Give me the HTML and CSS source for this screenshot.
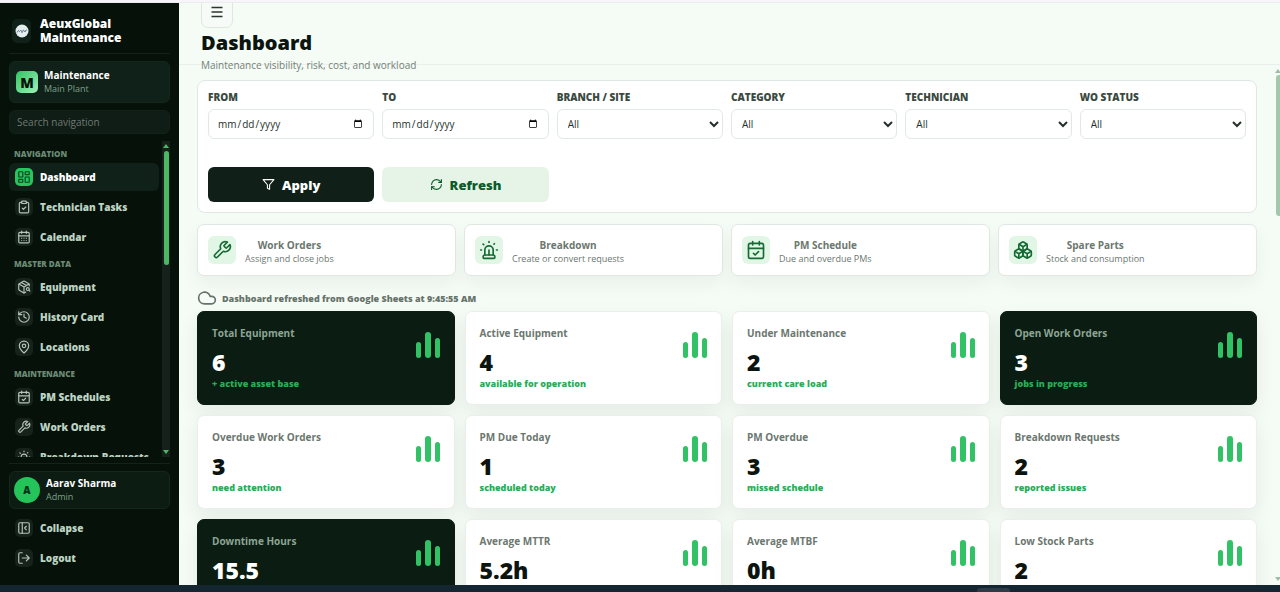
FILE: index.html
```html
<!DOCTYPE html>
<html lang="en">
<head>
    <meta charset="UTF-8">
    <meta name="viewport" content="width=device-width, initial-scale=1.0">
    <title>AeuxGlobal Maintenance</title>
    <link rel="stylesheet" href="styles.css">
</head>
<body>
<svg class="sprite" aria-hidden="true">
    <symbol id="i-dashboard" viewBox="0 0 24 24"><rect x="3" y="3" width="7" height="9" rx="1"/><rect x="14" y="3" width="7" height="5" rx="1"/><rect x="14" y="12" width="7" height="9" rx="1"/><rect x="3" y="16" width="7" height="5" rx="1"/></symbol>
    <symbol id="i-tasks" viewBox="0 0 24 24"><rect x="8" y="2" width="8" height="4" rx="1"/><path d="M16 4h2a2 2 0 0 1 2 2v14a2 2 0 0 1-2 2H6a2 2 0 0 1-2-2V6a2 2 0 0 1 2-2h2"/><path d="m9 14 2 2 4-4"/></symbol>
    <symbol id="i-calendar" viewBox="0 0 24 24"><path d="M8 2v4M16 2v4M3 10h18"/><rect x="3" y="4" width="18" height="18" rx="2"/><path d="M8 14h.01M12 14h.01M16 14h.01M8 18h.01M12 18h.01M16 18h.01"/></symbol>
    <symbol id="i-calendar-check" viewBox="0 0 24 24"><path d="M8 2v4M16 2v4M3 10h18"/><rect x="3" y="4" width="18" height="18" rx="2"/><path d="m9 16 2 2 4-4"/></symbol>
    <symbol id="i-equipment" viewBox="0 0 24 24"><path d="M21 10V8a2 2 0 0 0-1-1.73l-7-4a2 2 0 0 0-2 0l-7 4A2 2 0 0 0 3 8v8a2 2 0 0 0 1 1.73l7 4a2 2 0 0 0 2 0l2-1.14"/><path d="m7.5 4.27 9 5.15M3.29 7 12 12l8.71-5M12 22V12"/><circle cx="18.5" cy="15.5" r="2.5"/><path d="M20.27 17.27 22 19"/></symbol>
    <symbol id="i-history" viewBox="0 0 24 24"><path d="M3 12a9 9 0 1 0 9-9 9.75 9.75 0 0 0-6.74 2.74L3 8"/><path d="M3 3v5h5M12 7v5l4 2"/></symbol>
    <symbol id="i-pin" viewBox="0 0 24 24"><path d="M20 10c0 4.993-5.539 10.193-7.399 11.799a1 1 0 0 1-1.202 0C9.539 20.193 4 14.993 4 10a8 8 0 0 1 16 0"/><circle cx="12" cy="10" r="3"/></symbol>
    <symbol id="i-wrench" viewBox="0 0 24 24"><path d="M14.7 6.3a1 1 0 0 0 0 1.4l1.6 1.6a1 1 0 0 0 1.4 0l3.77-3.77a6 6 0 0 1-7.94 7.94l-6.91 6.91a2.12 2.12 0 0 1-3-3l6.91-6.91a6 6 0 0 1 7.94-7.94l-3.76 3.76z"/></symbol>
    <symbol id="i-siren" viewBox="0 0 24 24"><path d="M7 18v-6a5 5 0 1 1 10 0v6"/><path d="M5 21a1 1 0 0 0 1 1h12a1 1 0 0 0 1-1v-1a2 2 0 0 0-2-2H7a2 2 0 0 0-2 2z"/><path d="M21 12h1M18.5 4.5 18 5M2 12h1M12 2v1M4.929 4.929l.707.707M12 12v6"/></symbol>
    <symbol id="i-collapse" viewBox="0 0 24 24"><rect x="3" y="3" width="18" height="18" rx="2"/><path d="M9 3v18M16 15l-3-3 3-3"/></symbol>
    <symbol id="i-logout" viewBox="0 0 24 24"><path d="m16 17 5-5-5-5M21 12H9M9 21H5a2 2 0 0 1-2-2V5a2 2 0 0 1 2-2h4"/></symbol>
    <symbol id="i-menu" viewBox="0 0 24 24"><path d="M1 3h22M1 12h22M1 21h22"/></symbol>
    <symbol id="i-filter" viewBox="0 0 24 24"><path d="M22 3H2l8 9.46V19l4 2v-8.54z"/></symbol>
    <symbol id="i-refresh" viewBox="0 0 24 24"><path d="M3 12a9 9 0 0 1 9-9 9.75 9.75 0 0 1 6.74 2.74L21 8"/><path d="M21 3v5h-5"/><path d="M21 12a9 9 0 0 1-9 9 9.75 9.75 0 0 1-6.74-2.74L3 16"/><path d="M8 16H3v5"/></symbol>
    <symbol id="i-cloud" viewBox="0 0 24 24"><path d="M17.5 19H9a7 7 0 1 1 6.71-9h1.79a4.5 4.5 0 1 1 0 9Z"/></symbol>
    <symbol id="i-boxes" viewBox="0 0 24 24"><path d="M2.97 12.92A2 2 0 0 0 2 14.63v3.24a2 2 0 0 0 .97 1.71l3 1.8a2 2 0 0 0 2.06 0L12 19v-5.5l-5-3-4.03 2.42Z"/><path d="m7 16.5-4.74-2.85M7 16.5l5-3M7 16.5v5.17"/><path d="M12 13.5V19l3.97 2.38a2 2 0 0 0 2.06 0l3-1.8a2 2 0 0 0 .97-1.71v-3.24a2 2 0 0 0-.97-1.71L17 10.5l-5 3Z"/><path d="m17 16.5-5-3M17 16.5l4.74-2.85M17 16.5v5.17"/><path d="M7.97 4.42A2 2 0 0 0 7 6.13v4.37l5 3 5-3V6.13a2 2 0 0 0-.97-1.71l-3-1.8a2 2 0 0 0-2.06 0l-3 1.8Z"/><path d="M12 8 7.26 5.15M12 8l4.74-2.85M12 13.5V8"/></symbol>
    <symbol id="i-bars" viewBox="0 0 24 26"><rect x="0" y="10" width="5" height="16" rx="2.5"/><rect x="9" y="0" width="6" height="26" rx="3"/><rect x="19" y="6" width="5" height="20" rx="2.5"/></symbol>
</svg>

<div class="window-top"></div>

<div class="app">
    <aside class="sidebar">
        <div class="brand">
            <span class="brand-logo">
                <svg viewBox="0 0 14 14"><circle cx="7" cy="7" r="6.5" fill="#e4eeee"/><path d="M2 8.500c1-2.500 2-2.500 2.500-.500M5 7c1-1.500 2 0 1.500 1.500M7.500 8.500c0-3 1.500-3 2-.500M10 8c1-3 1.500-2 2-1.500" fill="none" stroke="#56728c" stroke-width="1"/></svg>
            </span>
            <strong>AeuxGlobal Maintenance</strong>
        </div>

        <div class="workspace">
            <span class="workspace-mark">M</span>
            <div class="stack">
                <strong>Maintenance</strong>
                <small>Main Plant</small>
            </div>
        </div>

        <input class="nav-search" type="search" placeholder="Search navigation" aria-label="Search navigation">

        <div class="nav-wrap">
            <nav class="nav">
                <h6>Navigation</h6>
                <a class="nav-item active" href="#"><span class="nav-icon"><svg class="icon"><use href="#i-dashboard"/></svg></span>Dashboard</a>
                <a class="nav-item" href="#"><span class="nav-icon"><svg class="icon"><use href="#i-tasks"/></svg></span>Technician Tasks</a>
                <a class="nav-item" href="#"><span class="nav-icon"><svg class="icon"><use href="#i-calendar"/></svg></span>Calendar</a>
                <h6>Master Data</h6>
                <a class="nav-item" href="#"><span class="nav-icon"><svg class="icon"><use href="#i-equipment"/></svg></span>Equipment</a>
                <a class="nav-item" href="#"><span class="nav-icon"><svg class="icon"><use href="#i-history"/></svg></span>History Card</a>
                <a class="nav-item" href="#"><span class="nav-icon"><svg class="icon"><use href="#i-pin"/></svg></span>Locations</a>
                <h6>Maintenance</h6>
                <a class="nav-item" href="#"><span class="nav-icon"><svg class="icon"><use href="#i-calendar-check"/></svg></span>PM Schedules</a>
                <a class="nav-item" href="#"><span class="nav-icon"><svg class="icon"><use href="#i-wrench"/></svg></span>Work Orders</a>
                <a class="nav-item" href="#"><span class="nav-icon"><svg class="icon"><use href="#i-siren"/></svg></span>Breakdown Requests</a>
            </nav>
            <div class="nav-scroll" aria-hidden="true">
                <i class="arrow-up"></i>
                <div class="nav-track"><div class="nav-thumb"></div></div>
                <i class="arrow-down"></i>
            </div>
        </div>

        <div class="sidebar-foot">
            <div class="user">
                <span class="avatar">A</span>
                <div class="stack">
                    <strong>Aarav Sharma</strong>
                    <small>Admin</small>
                </div>
            </div>
            <button class="nav-item" type="button"><span class="nav-icon"><svg class="icon"><use href="#i-collapse"/></svg></span>Collapse</button>
            <button class="nav-item" type="button"><span class="nav-icon"><svg class="icon"><use href="#i-logout"/></svg></span>Logout</button>
        </div>
    </aside>

    <div class="main">
        <header class="topbar">
            <button class="menu-btn" type="button" aria-label="Menu"><svg class="icon"><use href="#i-menu"/></svg></button>
            <h1>Dashboard</h1>
            <p>Maintenance visibility, risk, cost, and workload</p>
        </header>

        <div class="body-row">
            <main class="content">
                <form class="filters">
                    <div class="field">
                        <label for="from">From</label>
                        <input type="date" id="from">
                    </div>
                    <div class="field">
                        <label for="to">To</label>
                        <input type="date" id="to">
                    </div>
                    <div class="field">
                        <label for="branch">Branch / Site</label>
                        <select id="branch"><option>All</option></select>
                    </div>
                    <div class="field">
                        <label for="category">Category</label>
                        <select id="category"><option>All</option></select>
                    </div>
                    <div class="field">
                        <label for="technician">Technician</label>
                        <select id="technician"><option>All</option></select>
                    </div>
                    <div class="field">
                        <label for="status">WO Status</label>
                        <select id="status"><option>All</option></select>
                    </div>
                    <button class="btn btn-dark" type="button"><svg class="icon"><use href="#i-filter"/></svg>Apply</button>
                    <button class="btn btn-soft" type="button"><svg class="icon"><use href="#i-refresh"/></svg>Refresh</button>
                </form>

                <section class="quick">
                    <button class="quick-card" type="button">
                        <span class="quick-icon"><svg class="icon"><use href="#i-wrench"/></svg></span>
                        <span class="quick-text"><strong>Work Orders</strong><small>Assign and close jobs</small></span>
                    </button>
                    <button class="quick-card" type="button">
                        <span class="quick-icon"><svg class="icon"><use href="#i-siren"/></svg></span>
                        <span class="quick-text"><strong>Breakdown</strong><small>Create or convert requests</small></span>
                    </button>
                    <button class="quick-card" type="button">
                        <span class="quick-icon"><svg class="icon"><use href="#i-calendar-check"/></svg></span>
                        <span class="quick-text"><strong>PM Schedule</strong><small>Due and overdue PMs</small></span>
                    </button>
                    <button class="quick-card" type="button">
                        <span class="quick-icon"><svg class="icon"><use href="#i-boxes"/></svg></span>
                        <span class="quick-text"><strong>Spare Parts</strong><small>Stock and consumption</small></span>
                    </button>
                </section>

                <div class="sync"><svg class="icon"><use href="#i-cloud"/></svg>Dashboard refreshed from Google Sheets at 9:45:55 AM</div>

                <section class="kpis">
                    <article class="kpi dark"><div><h2>Total Equipment</h2><b>6</b><em>+ active asset base</em></div><svg class="bars"><use href="#i-bars"/></svg></article>
                    <article class="kpi"><div><h2>Active Equipment</h2><b>4</b><em>available for operation</em></div><svg class="bars"><use href="#i-bars"/></svg></article>
                    <article class="kpi"><div><h2>Under Maintenance</h2><b>2</b><em>current care load</em></div><svg class="bars"><use href="#i-bars"/></svg></article>
                    <article class="kpi dark"><div><h2>Open Work Orders</h2><b>3</b><em>jobs in progress</em></div><svg class="bars"><use href="#i-bars"/></svg></article>
                    <article class="kpi"><div><h2>Overdue Work Orders</h2><b>3</b><em>need attention</em></div><svg class="bars"><use href="#i-bars"/></svg></article>
                    <article class="kpi"><div><h2>PM Due Today</h2><b>1</b><em>scheduled today</em></div><svg class="bars"><use href="#i-bars"/></svg></article>
                    <article class="kpi"><div><h2>PM Overdue</h2><b>3</b><em>missed schedule</em></div><svg class="bars"><use href="#i-bars"/></svg></article>
                    <article class="kpi"><div><h2>Breakdown Requests</h2><b>2</b><em>reported issues</em></div><svg class="bars"><use href="#i-bars"/></svg></article>
                    <article class="kpi dark"><div><h2>Downtime Hours</h2><b>15.5</b></div><svg class="bars"><use href="#i-bars"/></svg></article>
                    <article class="kpi"><div><h2>Average MTTR</h2><b>5.2h</b></div><svg class="bars"><use href="#i-bars"/></svg></article>
                    <article class="kpi"><div><h2>Average MTBF</h2><b>0h</b></div><svg class="bars"><use href="#i-bars"/></svg></article>
                    <article class="kpi"><div><h2>Low Stock Parts</h2><b>2</b></div><svg class="bars"><use href="#i-bars"/></svg></article>
                </section>
            </main>
            <div class="page-scroll" aria-hidden="true">
                <i class="arrow-up"></i>
                <div class="page-track"><div class="page-thumb"></div></div>
                <i class="arrow-down"></i>
            </div>
        </div>
    </div>
</div>

<div class="window-bottom"><span></span></div>
</body>
</html>
```
FILE: styles.css
```css
* {
    box-sizing: border-box;
}

body {
    margin: 0;
    height: 100vh;
    display: flex;
    flex-direction: column;
    overflow: hidden;
    font-family: "Open Sans", "Noto Sans", sans-serif;
    font-size: 11px;
    color: #0b140e;
    background: #f5fbf5;
}

h1, h2, h6, p {
    margin: 0;
}

button, input, select {
    font-family: inherit;
}

.sprite {
    display: none;
}

.icon {
    flex: none;
    fill: none;
    stroke: currentColor;
    stroke-width: 2;
    stroke-linecap: round;
    stroke-linejoin: round;
}

.window-top {
    flex: none;
    height: 3px;
    background: #f7f5f9;
    border-bottom: 1px solid #ececef;
    position: relative;
    z-index: 3;
}

.window-bottom {
    flex: none;
    height: 7px;
    background: #142632;
    display: flex;
    justify-content: flex-end;
    align-items: flex-end;
    padding-right: 270px;
}

.window-bottom span {
    width: 33px;
    height: 4px;
    border-radius: 3px 3px 0 0;
    background: #2c3b46;
}

.app {
    flex: 1;
    min-height: 0;
    display: flex;
}

/* sidebar */
.sidebar {
    flex: none;
    width: 179px;
    padding: 0 9px 13px;
    display: flex;
    flex-direction: column;
    background: #06110a;
    color: #fff;
}

.brand {
    display: flex;
    align-items: center;
    gap: 9px;
    padding: 14px 3px 8px;
    margin-bottom: 7px;
    border-bottom: 1px solid #14231a;
}

.brand strong {
    font-size: 12px;
    font-weight: 800;
    line-height: 14px;
}

.brand-logo {
    flex: none;
    width: 19px;
    height: 24px;
    display: grid;
    place-items: center;
    border-radius: 5px;
    background: #0f2118;
}

.brand-logo svg {
    width: 14px;
    height: 14px;
}

.workspace, .user {
    display: flex;
    align-items: center;
    border-radius: 6px;
    border: 1px solid #14271b;
    background: #10211a;
}

.workspace {
    height: 42px;
    gap: 6px;
    padding: 0 6px;
    margin-bottom: 7px;
}

.workspace-mark {
    width: 22px;
    height: 22px;
    display: grid;
    place-items: center;
    border-radius: 5px;
    font-size: 14px;
    font-weight: 800;
    color: #06110a;
    background: linear-gradient(135deg, #2fc463, #a3efb9);
}

.stack {
    display: flex;
    flex-direction: column;
    line-height: 14px;
}

.stack strong {
    font-size: 10px;
    font-weight: 700;
}

.stack small {
    font-size: 9px;
    color: #7fa088;
}

.nav-search {
    flex: none;
    width: 100%;
    height: 24px;
    margin: 0 0 7px;
    padding: 0 7px;
    border: 1px solid #12221a;
    border-radius: 6px;
    font-size: 10px;
    color: #fff;
    background: #0f1d16;
    appearance: none;
}

.nav-search::placeholder {
    color: #6f7972;
}

.nav-wrap {
    flex: 1;
    min-height: 0;
    display: flex;
    justify-content: space-between;
}

.nav {
    width: 150px;
    overflow: hidden;
    padding-top: 2px;
}

.nav h6 {
    height: 20px;
    padding-left: 5px;
    font-size: 8px;
    font-weight: 800;
    line-height: 21px;
    text-transform: uppercase;
    color: #6a8b73;
}

.nav-item {
    width: 100%;
    height: 28px;
    margin-bottom: 2px;
    padding: 0 6px;
    display: flex;
    align-items: center;
    gap: 7px;
    border: 0;
    border-radius: 6px;
    font-size: 10px;
    font-weight: 800;
    color: #bcd3c2;
    background: none;
    text-decoration: none;
    white-space: nowrap;
}

.nav-item.active {
    color: #fff;
    background: #10211a;
}

.nav-icon {
    flex: none;
    width: 18px;
    height: 18px;
    display: grid;
    place-items: center;
    border-radius: 5px;
    color: #b4c5b9;
    background: #17221b;
}

.nav-icon .icon {
    width: 14px;
    height: 14px;
}

.active .nav-icon {
    color: #06451f;
    background: #27c55d;
}

.nav-scroll {
    width: 8px;
    display: flex;
    flex-direction: column;
    align-items: center;
    background: #17211b;
}

.arrow-up, .arrow-down {
    flex: none;
    width: 0;
    height: 0;
    border: 3px solid transparent;
}

.arrow-up {
    margin-bottom: 3px;
    border-bottom: 4px solid #4cb865;
}

.arrow-down {
    border-top: 4px solid #4cb865;
}

.nav-track {
    flex: 1;
}

.nav-thumb {
    width: 5px;
    height: 38%;
    border-radius: 3px;
    background: #4cb865;
}

.sidebar-foot {
    margin-top: 6px;
    padding-top: 7px;
    border-top: 1px solid #14231a;
}

.user {
    height: 38px;
    gap: 6px;
    padding: 0 4px;
    margin-bottom: 5px;
    background: #0c1c13;
}

.avatar {
    width: 26px;
    height: 26px;
    display: grid;
    place-items: center;
    border-radius: 50%;
    font-size: 10px;
    font-weight: 800;
    color: #06311a;
    background: #25c45b;
}

.sidebar-foot .nav-item:last-child {
    margin-bottom: 0;
}

/* main column */
.main {
    flex: 1;
    min-width: 0;
    display: flex;
    flex-direction: column;
}

/* the header is shorter than its content, which spills out evenly */
.topbar {
    flex: none;
    height: 62px;
    padding: 2px 0 0 22px;
    display: flex;
    flex-direction: column;
    justify-content: center;
    align-items: flex-start;
    border-bottom: 1px solid #e9efea;
    position: relative;
    z-index: 2;
}

.menu-btn {
    flex: none;
    width: 32px;
    height: 32px;
    display: grid;
    place-items: center;
    border: 1px solid #dfe7e1;
    border-radius: 7px;
    color: #2a352d;
    background: #f6fbf7;
}

.menu-btn .icon {
    width: 12px;
    height: 12px;
    stroke-width: 3;
    stroke-linecap: butt;
}

.topbar h1 {
    font-size: 20px;
    font-weight: 800;
    line-height: 30px;
}

.topbar p {
    font-size: 10px;
    line-height: 15px;
    color: #748178;
}

.body-row {
    flex: 1;
    min-height: 0;
    display: flex;
    overflow: hidden;
}

.content {
    flex: 1;
    min-width: 0;
    padding: 15px 18px 0;
}

.page-scroll {
    width: 5px;
    padding: 1px 0;
    display: flex;
    flex-direction: column;
    overflow: hidden;
}

.page-scroll .arrow-up {
    border-bottom-color: #9dbda5;
    margin-bottom: 2px;
}

.page-scroll .arrow-down {
    border-top-color: #9dbda5;
}

.page-track {
    flex: 1;
}

.page-thumb {
    height: 28%;
    margin-left: 1px;
    border-radius: 3px 0 0 3px;
    background: #a3c9ac;
}

.filters {
    display: grid;
    grid-template-columns: repeat(6, 1fr);
    gap: 28px 8px;
    padding: 10px;
    border: 1px solid #e0e8e2;
    border-radius: 8px;
    background: #fff;
}

.field {
    display: flex;
    flex-direction: column;
    gap: 5px;
}

.field label {
    font-size: 10px;
    font-weight: 800;
    line-height: 13px;
    text-transform: uppercase;
    color: #3a4a3f;
}

.field input, .field select {
    width: 100%;
    height: 30px;
    padding: 0 8px;
    border: 1px solid #e2e8e4;
    border-radius: 6px;
    font-size: 10px;
    color: #26302a;
    background: #fff;
}

.field select {
    padding: 0 2px 0 6px;
}

.btn {
    height: 35px;
    display: flex;
    align-items: center;
    justify-content: center;
    gap: 7px;
    border: 0;
    border-radius: 6px;
    font-size: 13px;
    font-weight: 800;
}

.btn .icon {
    width: 13px;
    height: 13px;
}

.btn-dark {
    color: #fff;
    background: #101f17;
}

.btn-soft {
    color: #0c5a2a;
    background: #e6f4e8;
}

.quick {
    display: grid;
    grid-template-columns: repeat(4, 1fr);
    gap: 8px;
    margin-top: 11px;
}

.quick-card {
    height: 52px;
    padding: 0 10px;
    display: flex;
    align-items: center;
    gap: 9px;
    border: 1px solid #e0e8e2;
    border-radius: 7px;
    background: #fff;
    box-shadow: 0 8px 18px rgba(20, 50, 30, 0.05);
}

.quick-icon {
    width: 28px;
    height: 28px;
    display: grid;
    place-items: center;
    border-radius: 6px;
    color: #156b34;
    background: #e2f6e6;
}

.quick-icon .icon {
    width: 20px;
    height: 20px;
}

.quick-text {
    display: flex;
    flex-direction: column;
    padding-top: 3px;
    line-height: 14px;
    color: #6b776f;
}

.quick-text strong {
    font-size: 10px;
    font-weight: 700;
}

.quick-text small {
    font-size: 9px;
}

.sync {
    display: flex;
    align-items: center;
    gap: 5px;
    height: 20px;
    margin: 12px 0 3px;
    font-size: 9px;
    font-weight: 800;
    color: #66736a;
}

.sync .icon {
    width: 20px;
    height: 20px;
    stroke-width: 2;
}

.kpis {
    display: grid;
    grid-template-columns: repeat(4, 1fr);
    gap: 10px;
}

.kpi {
    height: 94px;
    padding: 14px;
    display: flex;
    justify-content: space-between;
    border: 1px solid #e9efea;
    border-radius: 7px;
    background: #fff;
    box-shadow: 0 8px 20px rgba(20, 50, 30, 0.07);
}

.kpi h2 {
    font-size: 10px;
    font-weight: 700;
    line-height: 14px;
    color: #6b776f;
}

.kpi b {
    display: block;
    margin-top: 6px;
    font-size: 23px;
    font-weight: 800;
    line-height: 32px;
}

.kpi em {
    display: block;
    font-size: 9px;
    font-style: normal;
    font-weight: 800;
    line-height: 12px;
    color: #2bab57;
}

.kpi.dark {
    border-color: #0b1c12;
    color: #fff;
    background: #0b1c12;
}

.kpi.dark h2 {
    color: #8ba594;
}

.bars {
    width: 24px;
    height: 26px;
    margin-top: 6px;
    fill: #30c264;
}
```
